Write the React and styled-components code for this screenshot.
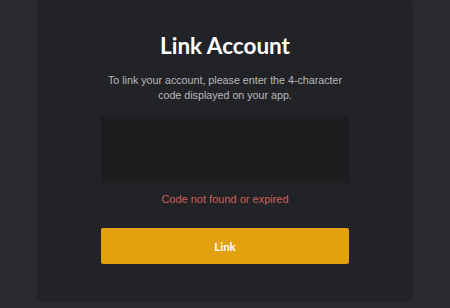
import React from 'react'
import styled, { createGlobalStyle } from 'styled-components'

const GlobalStyle = createGlobalStyle`
  * {
    margin: 0;
    padding: 0;
    box-sizing: border-box;
  }
  body {
    background: #2a2b2e;
    font-family: "Liberation Sans", Arial, sans-serif;
  }
`

const Page = styled.div`
  display: flex;
  justify-content: center;
  width: 450px;
  height: 308px;
`

const Panel = styled.section`
  display: flex;
  flex-direction: column;
  align-items: center;
  width: 374px;
  height: 300px;
  padding-top: 32px;
  background: #222326;
  box-shadow: 0 1px 3px rgba(0, 0, 0, 0.25);
`

const Title = styled.h1`
  font-family: Lato, "Liberation Sans", sans-serif;
  font-size: 22.5px;
  line-height: 28px;
  font-weight: 700;
  color: #ffffff;
`

const Intro = styled.p`
  margin-top: 13px;
  width: 250px;
  font-size: 10.7px;
  line-height: 14.5px;
  color: #b9b9bb;
  text-align: center;
`

const CodeInput = styled.input`
  margin-top: 15px;
  width: 248px;
  height: 66px;
  border: none;
  border-radius: 2px;
  outline: none;
  background: #1c1d1f;
  color: #fff;
  font-size: 28px;
  text-align: center;
`

const ErrorText = styled.p`
  margin-top: 9px;
  font-size: 11px;
  line-height: 14px;
  color: #cf5e5a;
`

const LinkButton = styled.button`
  margin-top: 22px;
  width: 248px;
  height: 36px;
  border: none;
  border-radius: 2px;
  background: #e4a10f;
  color: #ffffff;
  font-family: Lato, "Liberation Sans", sans-serif;
  font-size: 11.5px;
  font-weight: 700;
  cursor: pointer;
`

export default function App() {
  return (
    <Page>
      <GlobalStyle />
      <Panel>
        <Title>Link Account</Title>
        <Intro>
          To link your account, please enter the 4-character code displayed on your app.
        </Intro>
        <CodeInput type="text" maxLength={4} />
        <ErrorText>Code not found or expired</ErrorText>
        <LinkButton>Link</LinkButton>
      </Panel>
    </Page>
  )
}
